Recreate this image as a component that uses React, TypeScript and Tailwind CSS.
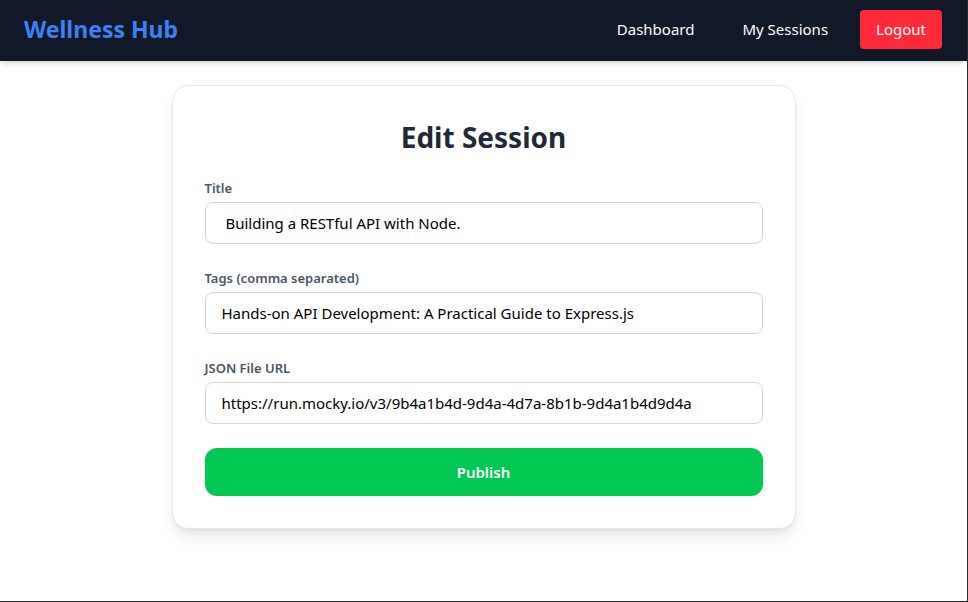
import React from "react";

const font = { fontFamily: '"Segoe UI", "Noto Sans", "Open Sans", sans-serif' };

function Field({ label, value }: { label: string; value: string }) {
    return (
        <div className="mb-6">
            <label className="block text-[13px] font-semibold text-[#4b5563] mb-1 leading-[20px]">{label}</label>
            <input
                readOnly
                value={value}
                className="w-full h-[42px] px-4 rounded-lg border border-[#d1d5db] text-[15px] text-black bg-white outline-none"
            />
        </div>
    );
}

export default function App() {
    return (
        <div className="h-[602px] bg-white border-r border-b border-[#2b2b2b] overflow-hidden" style={font}>
            {/* Navbar */}
            <nav className="h-[61px] bg-[#111827] flex items-center justify-between pl-6 pr-[25px] pb-[3px] shadow-md">
                <span className="text-[23px] font-bold text-[#3b82f6]">Wellness Hub</span>
                <div className="flex items-center">
                    <a className="text-white text-[15px] mr-12">Dashboard</a>
                    <a className="text-white text-[15px] mr-8">My Sessions</a>
                    <button className="bg-[#ff2a38] text-white text-[15px] h-[39px] px-4 rounded">Logout</button>
                </div>
            </nav>

            {/* Edit form */}
            <div className="pt-6 flex justify-center">
                <div className="w-[624px] bg-white border border-[#e5e7eb] rounded-2xl shadow-lg px-8 pt-[29px] pb-8">
                    <h1 className="text-[28px] font-bold text-[#1f2937] text-center mb-[19px] leading-[44px]">Edit Session</h1>
                    <Field label="Title" value=" Building a RESTful API with Node." />
                    <Field label="Tags (comma separated)" value="Hands-on API Development: A Practical Guide to Express.js" />
                    <Field label="JSON File URL" value="https://run.mocky.io/v3/9b4a1b4d-9d4a-4d7a-8b1b-9d4a1b4d9d4a" />
                    <button className="w-full h-[48px] bg-[#00c853] text-white font-semibold text-[15px] rounded-xl">Publish</button>
                </div>
            </div>
        </div>
    );
}
